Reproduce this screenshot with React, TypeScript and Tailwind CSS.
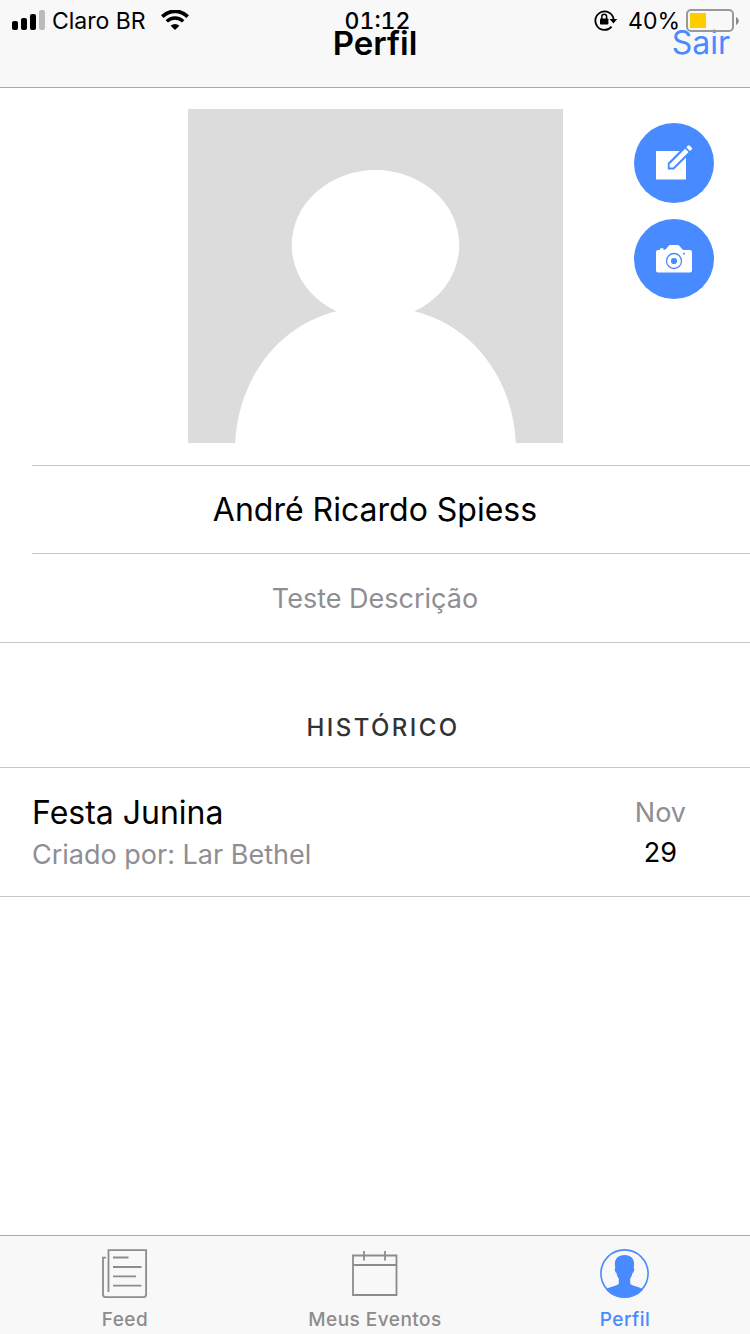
import type { ReactNode } from "react";

function SignalIcon() {
  return (
    <svg width="34" height="20" viewBox="0 0 34 20" aria-hidden="true">
      <rect x="0" y="11" width="6" height="9" rx="2" />
      <rect x="9" y="8" width="6" height="12" rx="2" />
      <rect x="18" y="4" width="6" height="16" rx="2" />
      <rect x="27" y="0" width="6" height="20" rx="2" fill="#bbb" />
    </svg>
  );
}

function WifiIcon() {
  return (
    <svg width="28" height="20" viewBox="0 0 28 20" fill="none" stroke="#000" aria-hidden="true">
      <path d="M1.300 6.600a18 18 0 0 1 25.400 0" strokeWidth="3.800" />
      <path d="M5.800 11.400a11.600 11.600 0 0 1 16.400 0" strokeWidth="3.400" />
      <path d="M14 20 9.600 15.800a6.200 6.200 0 0 1 8.800 0z" fill="#000" stroke="none" />
    </svg>
  );
}

function RotationLockIcon() {
  return (
    <svg width="24" height="22" viewBox="0 0 24 22" fill="none" aria-hidden="true">
      <path d="M17.600 17.600A9.200 9.200 0 1 1 19.600 10" stroke="#000" strokeWidth="1.800" />
      <path d="M15.600 10h7.600l-3.800 4.600z" fill="#000" />
      <rect x="6" y="9.500" width="8.400" height="6" rx="0.800" fill="#000" />
      <path d="M7.800 10V7.600a2.400 2.400 0 0 1 4.800 0V10" stroke="#000" strokeWidth="1.500" />
    </svg>
  );
}

function BatteryIcon() {
  return (
    <svg width="53" height="23" viewBox="0 0 53 23" aria-hidden="true">
      <rect x="1" y="1" width="46" height="21" rx="4" fill="none" stroke="#999" strokeWidth="2" />
      <rect x="4" y="4" width="16" height="15" fill="#fc0" />
      <path d="M50 8c3.600 1.400 3.600 6.600 0 8z" fill="#888" />
    </svg>
  );
}

function EditIcon() {
  return (
    <svg width="40" height="40" viewBox="0 0 40 40" aria-hidden="true">
      <path d="M2 8h30v28.500H2z" fill="#fff" />
      <path d="M13.800 20.100 30.800 3.100 37.200 9.500 20 26.500h-6.200z" fill="#488aff" />
      <path d="M15.700 24.600v-3.400L31.200 5.700l3.400 3.400-15.500 15.500z" fill="#fff" />
      <path d="m32.200 4.300 1.600-1.600q1-.9 1.900 0l1.900 1.900q1 1 0 1.900L36 8.100z" fill="#fff" />
    </svg>
  );
}

function CameraIcon() {
  return (
    <svg width="40" height="40" viewBox="0 0 40 40" aria-hidden="true">
      <path
        d="M4 11h2v-1q0-.8.8-.8h2q.8 0 .8.8v1q2 0 3.400-2.200L14 7.400Q15 6 16.600 6h6.800Q25 6 26 7.400l1 1.400Q28.400 11 30 11h6q2 0 2 2v18.600q0 2-2 2H4q-2 0-2-2V13q0-2 2-2z"
        fill="#fff"
      />
      <circle cx="20" cy="22" r="7.500" fill="none" stroke="#488aff" strokeWidth="1.300" />
      <circle cx="20" cy="22" r="3.100" fill="#488aff" />
      <circle cx="30" cy="14.800" r="1" fill="#488aff" />
    </svg>
  );
}

function FeedIcon() {
  return (
    <svg width="48" height="50" viewBox="0 0 48 50" fill="none" stroke="currentColor" strokeWidth="1.800" aria-hidden="true">
      <path d="M7.500 43V1.200h37.600V45.500q0 2.700-2.700 2.700H4.700q-2.700 0-2.700-2.700V8.600h3" />
      <path d="M12 8.500h15.500M12 18h28.500M12 27.300h23M12 36.600h28.500" />
    </svg>
  );
}

function CalendarIcon() {
  return (
    <svg width="48" height="50" viewBox="0 0 48 50" fill="none" stroke="currentColor" strokeWidth="1.800" aria-hidden="true">
      <path d="M2 6.500h43.500v39.500H2zM2 16h43.500M13 2v9.500M34 2v9.500" />
    </svg>
  );
}

function ProfileIcon() {
  return (
    <svg width="50" height="50" viewBox="0 0 50 50" aria-hidden="true">
      <circle cx="24.500" cy="24.500" r="23.600" fill="none" stroke="currentColor" strokeWidth="1.600" />
      <path
        transform="translate(-0.500 -0.500)"
        d="M25 6.500c-6.500 0-9.800 4-9.600 9.400.1 1.500.2 2.700.4 3.500-.8.300-.6 1.600-.2 3.200.3 1.200.8 1.900 1.400 2 .4 2.500 1.300 4.200 2.300 5.500v4.600c0 1-1.300 1.700-3 2.300-4 1.300-7.500 2.200-10 3.900C10.700 46 17.400 49.300 25 49.300S39.300 46 43.700 40.900c-2.500-1.700-6-2.600-10-3.900-1.700-.6-3-1.300-3-2.300v-4.600c1-1.300 1.900-3 2.300-5.500.6-.1 1.100-.8 1.400-2 .4-1.600.6-2.900-.2-3.200.2-.8.300-2 .4-3.500C34.800 10.500 31.500 6.500 25 6.500z"
        fill="currentColor"
      />
    </svg>
  );
}

function Avatar() {
  return (
    <svg
      className="h-[334px] w-full"
      viewBox="0 0 374 334"
      preserveAspectRatio="none"
      role="img"
      aria-label="Foto de perfil"
    >
      <rect width="374" height="334" fill="#dcdcdc" />
      <ellipse cx="187" cy="136" rx="83.500" ry="75" fill="#fff" />
      <path d="M47 334C50 270 90 216 149 202h76C284 216 324 270 327 334z" fill="#fff" />
    </svg>
  );
}

function RoundButton({ label, children }: { label: string; children: ReactNode }) {
  return (
    <button
      type="button"
      aria-label={label}
      className="flex size-20 items-center justify-center rounded-full bg-[#488aff]"
    >
      {children}
    </button>
  );
}

function Tab({ label, active, children }: { label: string; active?: boolean; children: ReactNode }) {
  return (
    <a
      href="#"
      aria-current={active ? "page" : undefined}
      className={`flex flex-col items-center gap-[9px] ${active ? "text-[#488aff]" : "text-[#8c8c8c]"}`}
    >
      {children}
      <span className="text-[19px] leading-6 font-medium tracking-wide">{label}</span>
    </a>
  );
}

export default function App() {
  return (
    <div className="flex min-h-screen flex-col bg-white font-['Inter','Liberation_Sans',sans-serif] text-black">
      <header className="relative border-b border-[#a9a9ac] bg-[#f8f8f8]">
        <div className="grid h-[87px] grid-cols-3 items-center px-5 pb-0.5">
          <h1 className="col-start-2 text-center text-[33px] leading-10 font-semibold">Perfil</h1>
          <a href="#" className="justify-self-end text-[32px] leading-10 text-[#488aff]">
            Sair
          </a>
        </div>
        <div className="absolute inset-x-0 top-0 grid h-10 grid-cols-3 items-center pr-[11px] pl-3 text-[23px] leading-7">
          <div className="flex items-center">
            <SignalIcon />
            <span className="mr-[15px] ml-1.5 pt-0.5">Claro BR</span>
            <WifiIcon />
          </div>
          <span className="pt-0.5 pl-1 text-center font-medium tabular-nums">01:12</span>
          <div className="flex items-center justify-end">
            <RotationLockIcon />
            <span className="mr-1.5 ml-2.5 pt-0.5">40%</span>
            <BatteryIcon />
          </div>
        </div>
      </header>

      <main className="flex-1">
        <section>
          <div className="grid grid-cols-4 pt-[21px] pb-[22px]">
            <div className="col-span-2 col-start-2">
              <Avatar />
            </div>
            <div className="flex flex-col items-end gap-4 pt-3.5 pr-9">
              <RoundButton label="Editar perfil">
                <EditIcon />
              </RoundButton>
              <RoundButton label="Alterar foto">
                <CameraIcon />
              </RoundButton>
            </div>
          </div>
          <hr className="ml-8 border-[#c8c7cc]" />
          <h2 className="pt-6 pb-[23px] text-center text-[32px] leading-10">André Ricardo Spiess</h2>
          <hr className="ml-8 border-[#c8c7cc]" />
          <p className="border-b border-[#c8c7cc] pt-[25px] pb-[23px] text-center text-[27px] leading-10 text-[#8e8e93]">
            Teste Descrição
          </p>
        </section>

        <section>
          <h3 className="border-b border-[#c8c7cc] pt-[69px] pb-[23px] pl-4 text-center text-[24px] leading-8 font-medium tracking-widest text-[#333]">
            HISTÓRICO
          </h3>
          <article className="flex items-start justify-between border-b border-[#c8c7cc] pt-[25px] pb-[19px] pr-16 pl-8">
            <div>
              <h4 className="text-[32px] leading-10">Festa Junina</h4>
              <p className="text-[27px] leading-[44px] text-[#8e8e93]">Criado por: Lar Bethel</p>
            </div>
            <div className="text-center text-[27px] leading-10">
              <p className="text-[#8e8e93]">Nov</p>
              <p>29</p>
            </div>
          </article>
        </section>
      </main>

      <nav className="grid grid-cols-3 border-t border-[#a9a9ac] bg-[#f8f8f8] pt-[13px] pb-0.5">
        <Tab label="Feed">
          <FeedIcon />
        </Tab>
        <Tab label="Meus Eventos">
          <CalendarIcon />
        </Tab>
        <Tab label="Perfil" active>
          <ProfileIcon />
        </Tab>
      </nav>
    </div>
  );
}
